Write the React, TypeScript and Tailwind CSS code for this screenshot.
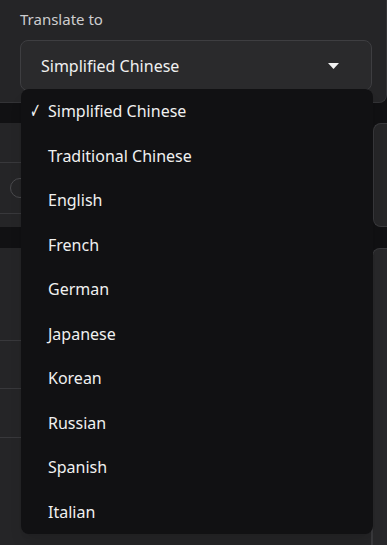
import React from 'react';

const languages = [
  'Simplified Chinese',
  'Traditional Chinese',
  'English',
  'French',
  'German',
  'Japanese',
  'Korean',
  'Russian',
  'Spanish',
  'Italian',
];

const App: React.FC = () => {
  const selected = 'Simplified Chinese';

  return (
    <div
      className="relative w-[387px] h-[545px] overflow-hidden bg-[#111113] text-[#e6e6e6]"
      style={{ fontFamily: '"Noto Sans", "Open Sans", sans-serif' }}
    >
      {/* top card */}
      <div className="h-[103px] w-[387px] bg-[#252527] border-r border-b border-[#333336] rounded-br-lg pt-[8px] pl-[20px]">
        <div className="text-[15px] leading-[22px] text-[#cdcdcf]">Translate to</div>
        <div className="mt-[10px] w-[352px] h-[51px] rounded-lg border border-[#3e3e41] bg-[#2a2a2c] flex items-center pl-[20px] pr-[32px]">
          <span className="flex-1 text-[16px] text-[#f0f0f0]">{selected}</span>
          <svg width="11" height="6" viewBox="0 0 11 6">
            <path d="M0 0 L11 0 L5.5 6 Z" fill="#f2f2f2" />
          </svg>
        </div>
      </div>

      {/* second card row */}
      <div className="mt-[20px] flex h-[104px]">
        <div className="w-[372px] bg-[#252527] rounded-r-lg flex flex-col">
          <div className="h-[40px] border-b border-[#38383b]" />
          <div className="h-[51px] border-b border-[#38383b] flex items-center pl-[10px]">
            <div className="w-[20px] h-[20px] rounded-full border border-[#4a4a4d]" />
          </div>
        </div>
        <div className="ml-[1px] flex-1 bg-[#262628] border-l border-t border-b border-[#39393c] rounded-l-lg" />
      </div>

      {/* third card row */}
      <div className="mt-[21px] flex h-[320px]">
        <div className="w-[372px] bg-[#252527] border-r border-[#3a3a3d] flex flex-col">
          <div className="h-[93px] border-b border-[#38383b]" />
          <div className="h-[48px] border-b border-[#38383b]" />
          <div className="h-[49px] border-b border-[#38383b]" />
        </div>
        <div className="flex-1 bg-[#28282a] border-l border-t border-[#39393c] rounded-tl-lg" />
      </div>

      {/* dropdown menu */}
      <div className="absolute left-[21px] top-[89px] w-[352px] bg-[#111113] rounded-lg shadow-lg">
        {languages.map((lang) => (
          <div key={lang} className="h-[44.5px] flex items-center pl-[9px] text-[16px] text-[#f0f0f0]">
            <span className="w-[18px] flex items-center">
              {lang === selected && (
                <span
                  className="inline-block text-[21px] leading-none scale-x-[0.62] origin-left"
                  style={{ fontFamily: '"DejaVu Sans", sans-serif' }}
                >
                  ✓
                </span>
              )}
            </span>
            <span>{lang}</span>
          </div>
        ))}
      </div>
    </div>
  );
};

export default App;
